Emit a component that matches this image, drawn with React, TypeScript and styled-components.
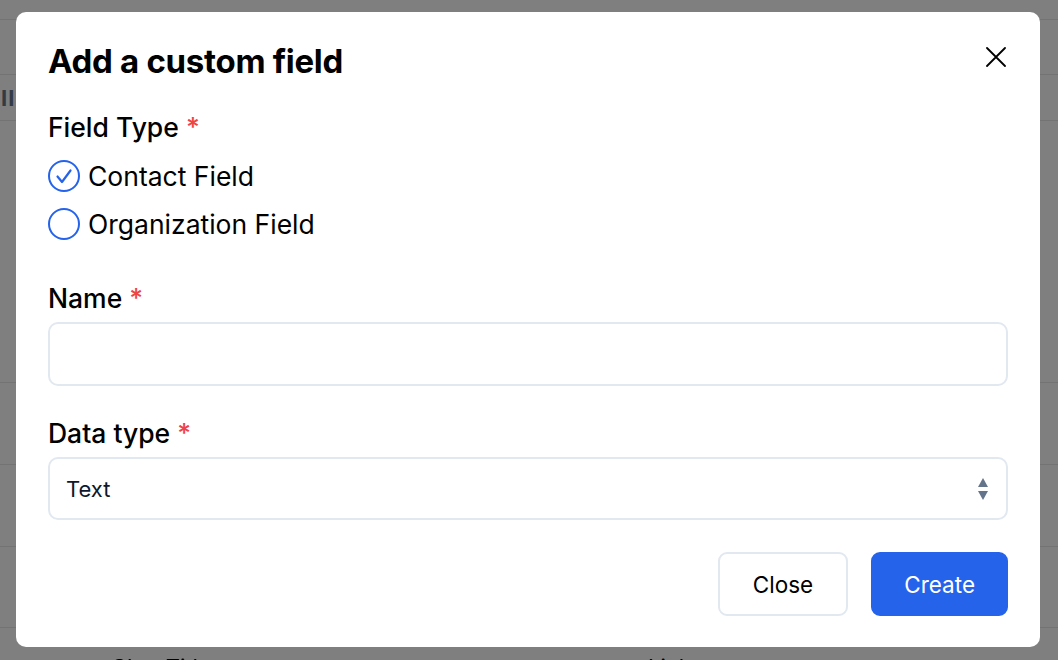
import styled, { createGlobalStyle } from "styled-components";

const GlobalStyle = createGlobalStyle`
  * { box-sizing: border-box; }
  html, body {
    margin: 0;
    padding: 0;
    background: #fff;
    font-family: Inter, "Noto Sans", "Liberation Sans", sans-serif;
    overflow: hidden;
  }
`;

const bgRows = [
  { height: 20 },
  { height: 55 },
  { height: 46, icon: true },
  { height: 262 },
  { height: 82 },
  { height: 82 },
  { height: 81 },
  { height: 60, cells: ["Chat Title", "Link"] },
];

export default function App() {
  return (
    <>
      <GlobalStyle />
      <BackgroundPage>
        {bgRows.map((r, i) => (
          <BgRow key={i} style={{ height: r.height }}>
            {r.icon && <BgIcon>II</BgIcon>}
            {r.cells && (
              <>
                <BgCell $left={111}>{r.cells[0]}</BgCell>
                <BgCell $left={648}>{r.cells[1]}</BgCell>
              </>
            )}
          </BgRow>
        ))}
      </BackgroundPage>
      <Overlay>
        <Modal>
          <Header>
            <Title>Add a custom field</Title>
            <CloseIcon aria-label="Close">
              <svg width="20" height="20" viewBox="0 0 20 20">
                <path d="M1 1 L19 19 M19 1 L1 19" stroke="#000" strokeWidth="1.8" strokeLinecap="round" />
              </svg>
            </CloseIcon>
          </Header>

          <Label $top={30}>
            Field Type <Req>*</Req>
          </Label>
          <RadioList>
            <RadioRow>
              <RadioCircle checked />
              Contact Field
            </RadioRow>
            <RadioRow>
              <RadioCircle />
              Organization Field
            </RadioRow>
          </RadioList>

          <Label $top={38}>
            Name <Req>*</Req>
          </Label>
          <TextInput />

          <Label $top={31}>
            Data type <Req>*</Req>
          </Label>
          <SelectBox>
            <span>Text</span>
            <svg width="12" height="24" viewBox="0 0 12 24">
              <path d="M6 1 L11 10 L1 10 Z" fill="#64748b" />
              <path d="M1 14 L11 14 L6 23 Z" fill="#64748b" />
            </svg>
          </SelectBox>

          <Footer>
            <Button>Close</Button>
            <Button $primary>Create</Button>
          </Footer>
        </Modal>
      </Overlay>
    </>
  );
}

function RadioCircle({ checked }: { checked?: boolean }) {
  return (
    <svg width="32" height="32" viewBox="0 0 32 32">
      <circle cx="16" cy="16" r="15" fill="#fff" stroke="#2563eb" strokeWidth="2" />
      {checked && (
        <polyline
          points="9.5,16.5 14,22 22.5,10.5"
          fill="none"
          stroke="#2563eb"
          strokeWidth="2.2"
          strokeLinecap="round"
          strokeLinejoin="round"
        />
      )}
    </svg>
  );
}

const BackgroundPage = styled.div`
  display: flex;
  flex-direction: column;
`;

const BgRow = styled.div`
  position: relative;
  border-bottom: 1px solid #e6e6e6;
  flex-shrink: 0;
`;

const BgIcon = styled.div`
  padding: 10px 0 0 1px;
  font-size: 22px;
  font-weight: 700;
  color: #64748b;
  letter-spacing: 1px;
`;

const BgCell = styled.div<{ $left: number }>`
  position: absolute;
  top: 26px;
  left: ${(p) => p.$left}px;
  font-size: 22px;
  color: #000;
`;

const Overlay = styled.div`
  position: fixed;
  inset: 0;
  background: rgba(0, 0, 0, 0.5);
  padding: 12px 18px 13px 16px;
  display: flex;
`;

const Modal = styled.div`
  width: 1024px;
  height: 635px;
  background: #fff;
  border-radius: 10px;
  padding: 29px 32px 31px;
  display: flex;
  flex-direction: column;
`;

const Header = styled.div`
  display: flex;
  justify-content: space-between;
  align-items: flex-start;
`;

const Title = styled.h2`
  margin: 0;
  font-size: 33px;
  line-height: 40px;
  font-weight: 700;
  color: #000;
  letter-spacing: -0.3px;
`;

const CloseIcon = styled.button`
  border: none;
  background: none;
  padding: 0;
  margin: 6px 2px 0 0;
  display: flex;
  cursor: pointer;
`;

const Label = styled.div<{ $top: number }>`
  margin-top: ${(p) => p.$top}px;
  font-size: 26.5px;
  line-height: 32px;
  font-weight: 500;
  color: #000;
`;

const Req = styled.span`
  color: #ef4444;
`;

const RadioList = styled.div`
  display: flex;
  flex-direction: column;
  gap: 8px;
  margin-top: 13px;
`;

const RadioRow = styled.label`
  display: flex;
  align-items: center;
  gap: 8px;
  height: 40px;
  font-size: 26.5px;
  color: #000;
`;

const TextInput = styled.input`
  margin-top: 8px;
  height: 64px;
  width: 100%;
  border: 2px solid #e2e8f0;
  border-radius: 10px;
  font-family: inherit;
  font-size: 22px;
  padding: 0 18px;
  outline: none;
`;

const SelectBox = styled.div`
  margin-top: 8px;
  height: 63px;
  border: 2px solid #e2e8f0;
  border-radius: 10px;
  display: flex;
  align-items: center;
  justify-content: space-between;
  padding: 0 17px 0 16px;
  font-size: 22px;
  color: #0f172a;
`;

const Footer = styled.div`
  margin-top: 32px;
  display: flex;
  justify-content: flex-end;
  gap: 23px;
`;

const Button = styled.button<{ $primary?: boolean }>`
  height: 64px;
  padding: 0 ${(p) => (p.$primary ? 31 : 33)}px;
  border-radius: 9px;
  font-family: inherit;
  font-size: 22.5px;
  cursor: pointer;
  border: 2px solid ${(p) => (p.$primary ? "#2563eb" : "#e2e8f0")};
  background: ${(p) => (p.$primary ? "#2563eb" : "#fff")};
  color: ${(p) => (p.$primary ? "#fff" : "#000")};
`;
